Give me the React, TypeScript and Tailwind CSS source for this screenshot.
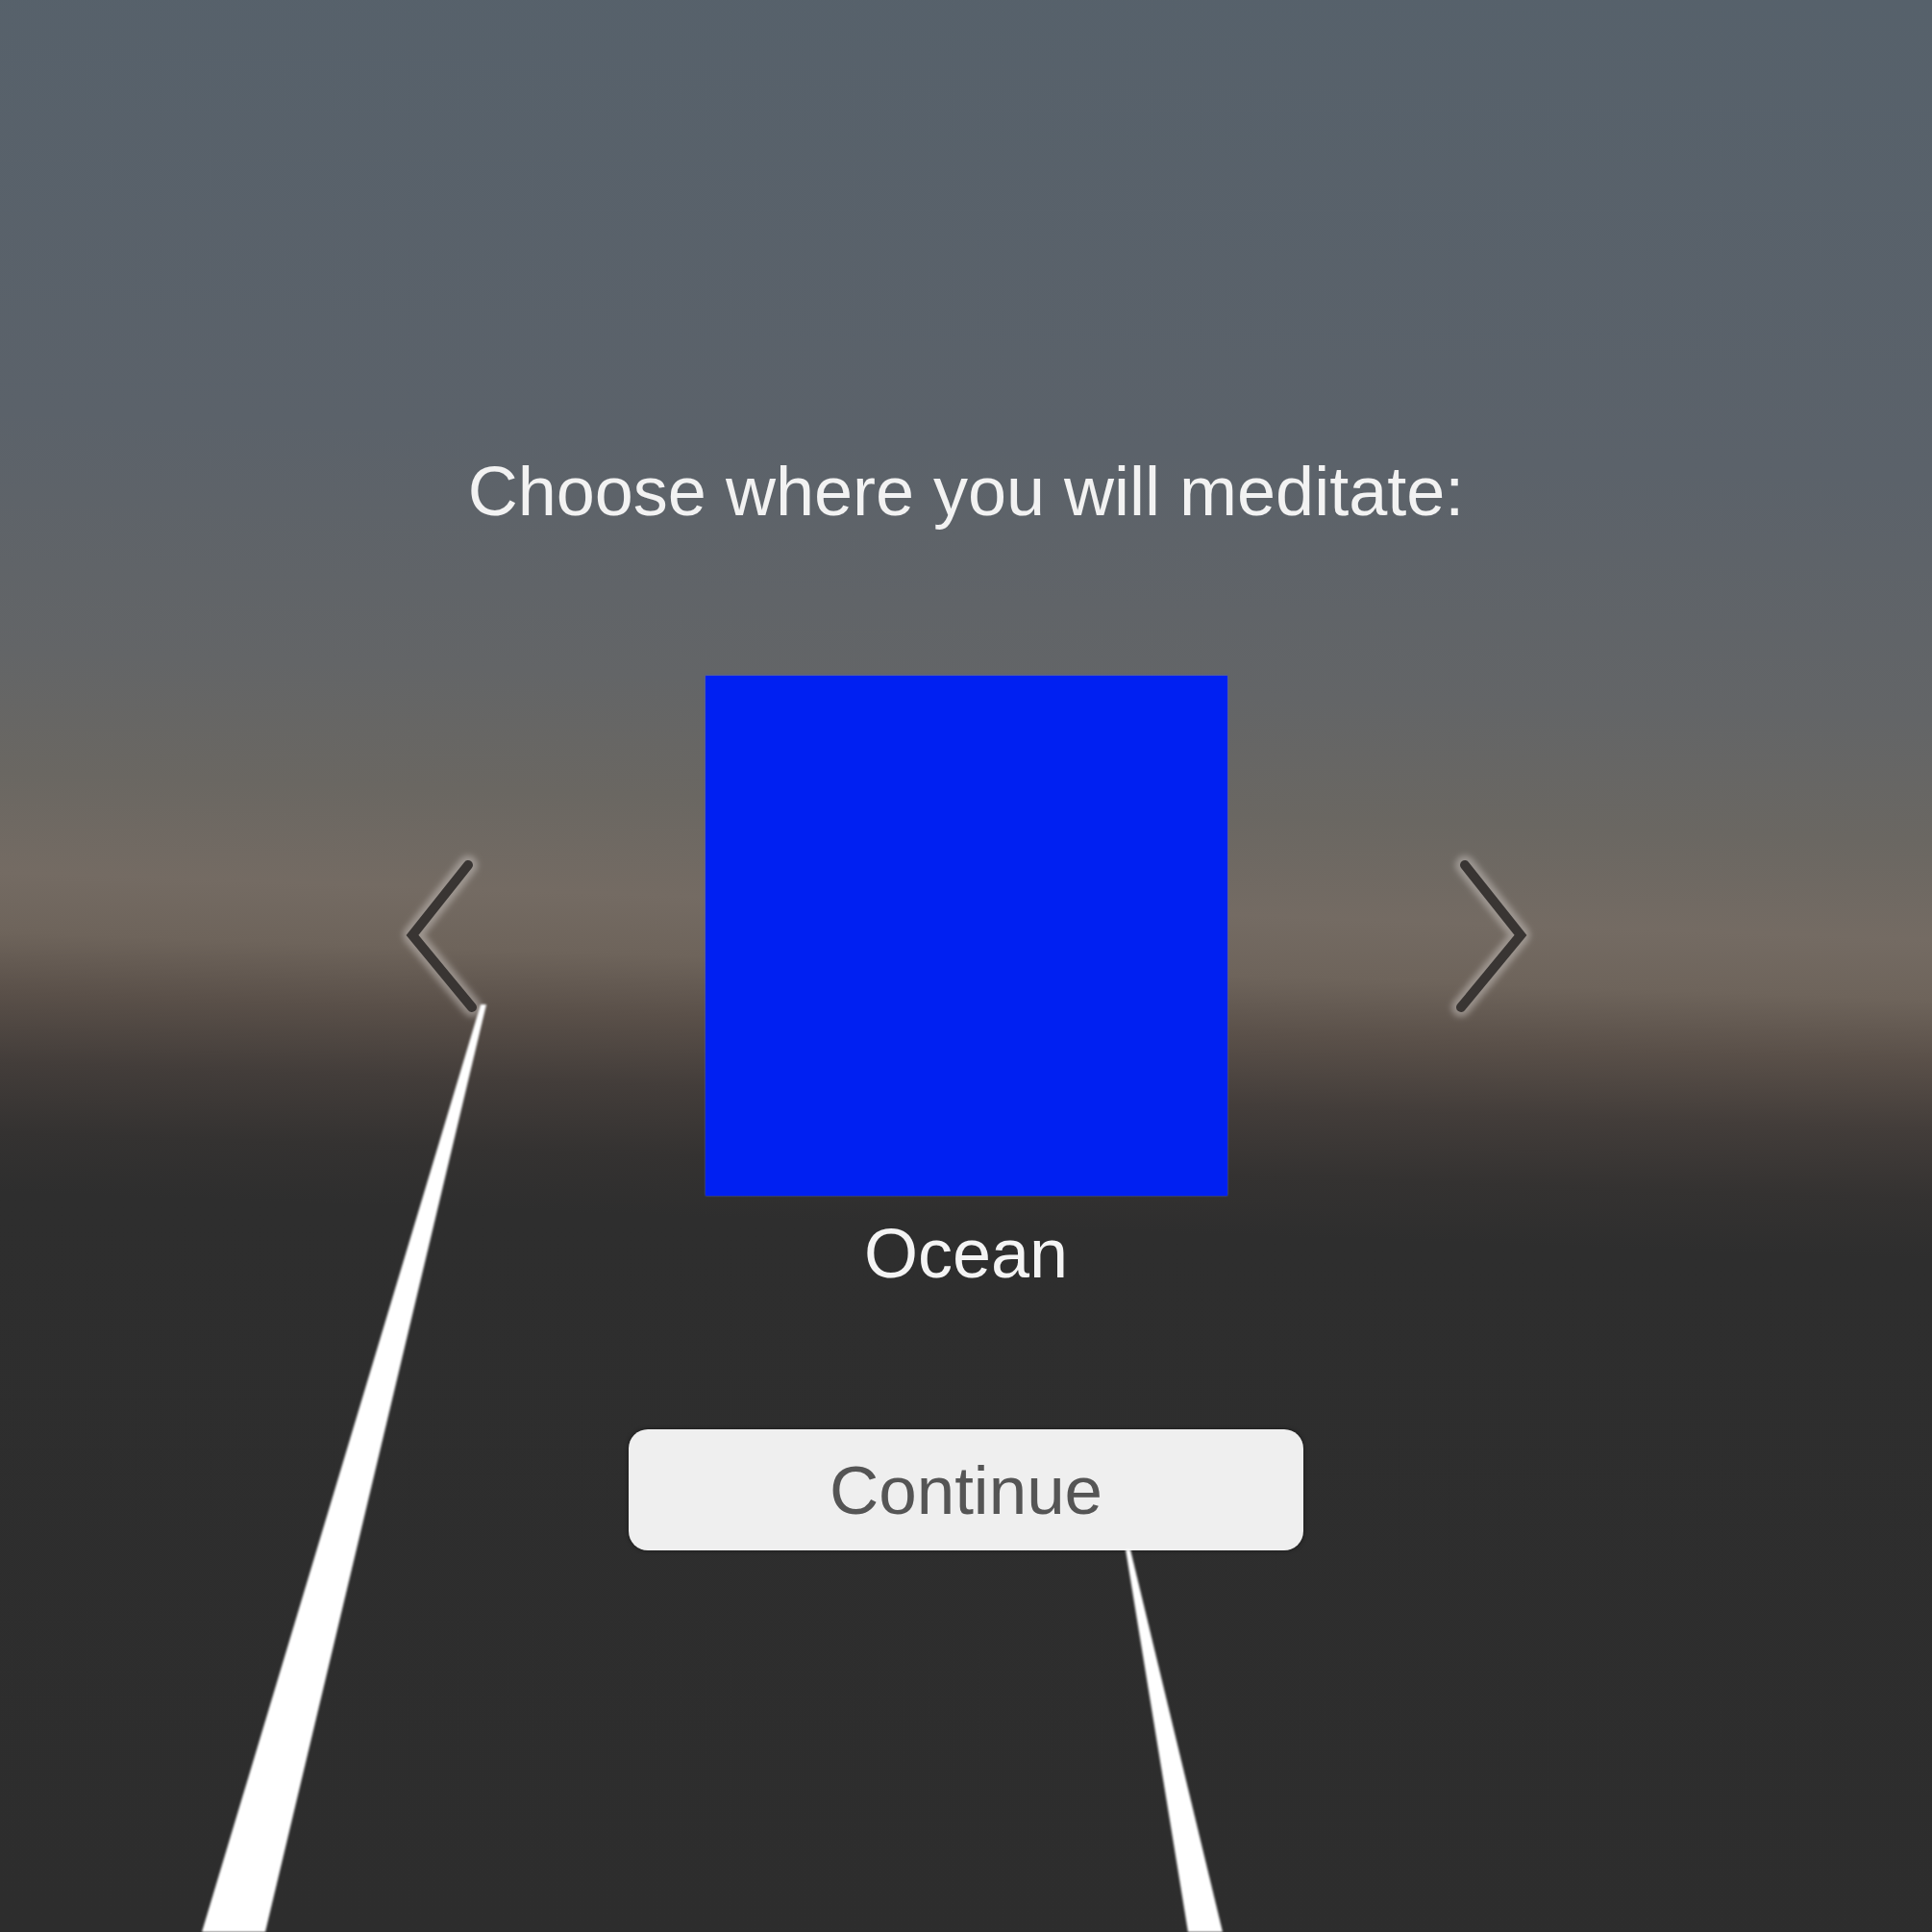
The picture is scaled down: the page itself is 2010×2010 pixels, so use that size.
const font = "font-['Liberation_Sans','Arial',sans-serif]";

function Chevron({ side }: { side: 'left' | 'right' }) {
  const points = side === 'left' ? '66,14 8,87 70,162' : '14,14 72,87 10,162';
  return (
    <svg width="80" height="176" viewBox="0 0 80 176" className="shrink-0 overflow-visible">
      <defs>
        <filter id={`halo-${side}`} x="-50%" y="-50%" width="200%" height="200%">
          <feGaussianBlur stdDeviation="3" />
        </filter>
      </defs>
      <polyline
        points={points}
        fill="none"
        stroke="#c9c4bf"
        strokeOpacity="0.5"
        strokeWidth="20"
        strokeLinecap="round"
        strokeLinejoin="round"
        filter={`url(#halo-${side})`}
      />
      <polyline
        points={points}
        fill="none"
        stroke="#393533"
        strokeWidth="10"
        strokeLinecap="round"
        strokeLinejoin="miter"
      />
    </svg>
  );
}

// the two pointer rays from the controllers
function Beams() {
  return (
    <svg width="2010" height="2010" viewBox="0 0 2010 2010" className="pointer-events-none absolute left-0 top-0">
      <defs>
        <filter id="soft" x="-10%" y="-10%" width="120%" height="120%">
          <feGaussianBlur stdDeviation="1.2" />
        </filter>
      </defs>
      <polygon points="500,1045 506,1045 276,2010 210,2010" fill="#ffffff" filter="url(#soft)" />
      <polygon points="1171,1612 1176,1612 1272,2010 1236,2010" fill="#ffffff" filter="url(#soft)" />
    </svg>
  );
}

export default function App() {
  return (
    <main
      className={`relative flex h-[2010px] w-[2010px] flex-col items-center overflow-hidden bg-[linear-gradient(182deg,#56616b_0%,#5b626a_24%,#636567_36%,#6a6762_42%,#746b63_47%,#6e645b_50%,#5a5049_53%,#433d3a_56.5%,#343231_60%,#2e2e2e_63%,#2d2d2d_100%)] ${font}`}
    >
      <h1 className="mt-[475px] text-[72px] font-normal leading-none text-[#f2f2f2]">Choose where you will meditate:</h1>

      <div className="mt-[156px] flex items-center gap-[233px]">
        <Chevron side="left" />
        <div className="h-[541px] w-[543px] bg-[#0020f2] shadow-[0_0_2px_#3a55ff]" />
        <Chevron side="right" />
      </div>

      <p className="mt-[24px] text-[72px] leading-none text-[#f4f4f4]">Ocean</p>

      <button
        type="button"
        className="mt-[147px] flex h-[126px] w-[702px] items-center justify-center rounded-[20px] bg-[#efefef] text-[71px] leading-none text-[#555555] shadow-[0_0_4px_rgba(0,0,0,0.5)]"
      >
        Continue
      </button>

      <Beams />
    </main>
  );
}
